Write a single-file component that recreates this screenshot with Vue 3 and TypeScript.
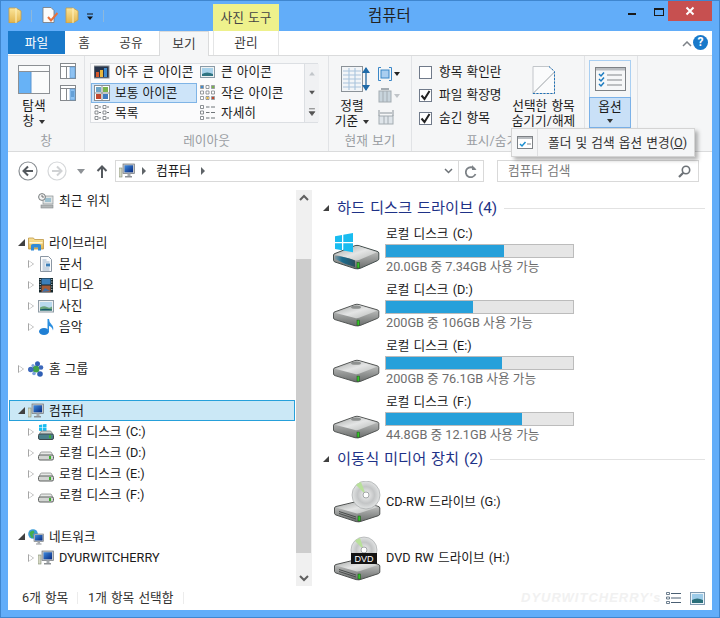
<template>
  <div class="window">
    <!-- 아이콘 심볼 -->
    <svg class="defs" width="0" height="0" aria-hidden="true">
      <defs>
        <linearGradient id="g-top" x1="0" y1="0" x2="1" y2="1"><stop offset="0" stop-color="#a5a8a6" /><stop offset=".5" stop-color="#e4e5e5" /><stop offset="1" stop-color="#b4b7b5" /></linearGradient>
        <linearGradient id="g-side" x1="0" y1="0" x2="0" y2="1"><stop offset="0" stop-color="#d6d7d6" /><stop offset="1" stop-color="#6a6d6c" /></linearGradient>
        <linearGradient id="g-teal" x1="0" y1="0" x2="1" y2="0"><stop offset="0" stop-color="#7f9aa3" /><stop offset=".35" stop-color="#1c6d90" /><stop offset="1" stop-color="#2c4f5c" /></linearGradient>
        <linearGradient id="g-screen" x1="0" y1="0" x2="1" y2="1"><stop offset="0" stop-color="#3f8be0" /><stop offset="1" stop-color="#06297f" /></linearGradient>
        <linearGradient id="g-folder" x1="0" y1="0" x2="0" y2="1"><stop offset="0" stop-color="#fbe59a" /><stop offset="1" stop-color="#e2b44c" /></linearGradient>
        <radialGradient id="g-disc"><stop offset="0" stop-color="#f4f4f4" /><stop offset=".6" stop-color="#c3c5c6" /><stop offset="1" stop-color="#e2e4e4" /></radialGradient>

        <symbol id="i-monitor" viewBox="0 0 16 16">
          <rect x="0" y="5" width="3" height="9" fill="#d5d8c4" stroke="#7f8a72" stroke-width=".6" />
          <rect x="4" y="1" width="11.5" height="9.5" fill="#c2c6ca" stroke="#6f7478" stroke-width=".7" />
          <rect x="5.5" y="2.3" width="8.5" height="7" fill="url(#g-screen)" />
          <rect x="8.5" y="10.5" width="3" height="2.5" fill="#a5a9ad" />
          <rect x="6" y="13" width="7" height="1.5" fill="#8d9195" />
        </symbol>
        <symbol id="i-recent" viewBox="0 0 16 16">
          <rect x="5" y="3" width="10" height="8" fill="#dfe3e3" stroke="#8b9192" stroke-width=".7" />
          <rect x="7" y="5" width="6" height="4" fill="#9cc0cf" />
          <circle cx="4" cy="4" r="3.4" fill="#f4f4f4" stroke="#767b7c" />
          <path d="M4 2v2h2" fill="none" stroke="#555" stroke-width=".8" />
          <rect x="3" y="12" width="12" height="3" fill="#b3b7b7" stroke="#83888a" stroke-width=".6" />
        </symbol>
        <symbol id="i-library" viewBox="0 0 16 16">
          <path d="M.5 3h5l1 1.5h9V14H.5z" fill="url(#g-folder)" stroke="#bd9442" stroke-width=".8" />
          <path d="M1.5 7h13v1.5h-13z" fill="#fff6d5" />
          <path d="M3 15.500V10.500Q3 9 5 9h6q2 0 2 1.500v5h-3v-3H6v3z" fill="#2f8ad6" />
        </symbol>
        <symbol id="i-doc" viewBox="0 0 16 16">
          <path d="M2.500.5h8l3 3v12h-11z" fill="#fbfcfd" stroke="#8a96a3" />
          <path d="M4.500 4h4M4.500 6h7M4.500 12h7M4.500 14h7" stroke="#8aa6bf" stroke-width=".9" />
          <rect x="8" y="7.500" width="4" height="3" fill="#3d7fb8" />
          <path d="M4.500 8h3M4.500 10h3" stroke="#8aa6bf" stroke-width=".9" />
        </symbol>
        <symbol id="i-video" viewBox="0 0 16 16">
          <rect x="1" y="1" width="14" height="14.500" fill="#14262b" />
          <rect x="3.500" y="1.500" width="9" height="6" fill="#3b7eb8" />
          <rect x="3.500" y="8.500" width="9" height="6.500" fill="#a35b36" />
          <path d="M4 15l3-4 5 3z" fill="#3e6fa6" />
          <path d="M1.700 2.500h1M1.700 5h1M1.700 7.500h1M1.700 10h1M1.700 12.500h1M13.300 2.500h1M13.300 5h1M13.300 7.500h1M13.300 10h1M13.300 12.500h1" stroke="#d7e3ea" stroke-width="1.200" />
        </symbol>
        <symbol id="i-photo" viewBox="0 0 16 16">
          <rect x=".5" y="2.500" width="15" height="11.500" fill="#edf0f2" stroke="#8e9ba5" />
          <rect x="2" y="4" width="12" height="8.500" fill="#b8d9ee" />
          <path d="M2 9.500q4-2 7-.5t5-.5v4H2z" fill="#6aa47c" />
          <path d="M2 11.500q5-1.500 12 0v1H2z" fill="#15576b" />
        </symbol>
        <symbol id="i-music" viewBox="0 0 16 16">
          <ellipse cx="6" cy="12.500" rx="5" ry="3.500" fill="#1f7fd4" />
          <path d="M9.500 12V0h1.500q0 3 2.500 5.500t1.500 6q-1-4-4-4.500v5z" fill="#2b8fe0" />
        </symbol>
        <symbol id="i-homegroup" viewBox="0 0 16 16">
          <circle cx="8" cy="8" r="3.500" fill="#3fa348" />
          <circle cx="9.500" cy="2.800" r="2.500" fill="#2f5fb5" />
          <circle cx="2.800" cy="8.500" r="2.800" fill="#3c68bb" />
          <circle cx="13" cy="6.500" r="2.300" fill="#3c68bb" />
          <circle cx="12" cy="13" r="2.800" fill="#2f5fb5" />
          <circle cx="6" cy="12.500" r="1.800" fill="#7aa0dc" />
          <circle cx="5" cy="4.500" r="1.600" fill="#7aa0dc" />
        </symbol>
        <symbol id="i-network" viewBox="0 0 16 16">
          <circle cx="5" cy="5" r="4.800" fill="#3b9bd8" />
          <path d="M1.500 3.500q2-2 4-2l1 2-2 2 1 3-2 .5-1.500-3z" fill="#47ad4b" />
          <rect x="6" y="5" width="9.500" height="7.500" fill="#bfc4c8" stroke="#6f7478" stroke-width=".6" />
          <rect x="7" y="6" width="7.500" height="5.500" fill="url(#g-screen)" />
          <rect x="9.500" y="12.500" width="2.500" height="2" fill="#a5a9ad" />
          <rect x="8" y="14.500" width="5.500" height="1" fill="#8d9195" />
        </symbol>
        <symbol id="i-drive" viewBox="0 0 16 16">
          <path d="M1 11l1.500-3.500Q3 7 4 7h8q1 0 1.500.5L15 11z" fill="#e6e8e6" stroke="#8a8d8b" stroke-width=".8" />
          <rect x=".5" y="10" width="15" height="5" rx="1.500" fill="#d2d4d2" stroke="#5f6261" />
          <rect x="11" y="11" width="2" height="3" fill="#3cb22f" />
        </symbol>
        <symbol id="i-drive-win" viewBox="0 0 16 16">
          <path d="M1 .9L4.200.4V3.400H1zM4.900.3L8.500 0v3.400H4.900zM1 4.100h3.200v3.100L1 6.800zM4.900 4.100h3.600V7.500l-3.600-.3z" fill="#19bcf0" />
          <path d="M1 11l1.500-3q.5-1 1.500-1h8q1 0 1.500 1L15 11z" fill="#cdd2cf" stroke="#7f8583" stroke-width=".8" />
          <rect x=".5" y="10" width="15" height="5.500" rx="1.500" fill="#4b7f8a" stroke="#3c4a4e" />
          <rect x="11" y="11.300" width="2" height="3" fill="#3cb22f" />
        </symbol>
        <symbol id="i-hdd" viewBox="0 0 48 26" preserveAspectRatio="none">
          <path d="M1.500 11Q1.500 10 3 9.500L23 1.700q2-.7 4 0l18 5.600q1.800.6 1.800 1.700v6q0 1-1.500 1.700L29 24q-3 1.400-6 .6L3 18q-1.500-.6-1.500-1.700z" fill="url(#g-side)" stroke="#4f5251" stroke-width="1" />
          <path d="M3 10.500L24 2.500q1.500-.5 3 0L45 8.300 27 16q-2 .8-4 .3z" fill="url(#g-top)" />
          <ellipse cx="24" cy="4.500" rx="5" ry="1.700" fill="#8d908f" />
          <rect x="25" y="18.500" width="2.300" height="5.500" fill="#35c22b" stroke="#17510f" stroke-width=".5" />
        </symbol>
        <symbol id="i-hdd-win" viewBox="0 0 48 37">
          <path d="M1.500 22Q1.500 21 3 20.500L23 12.700q2-.7 4 0l18 5.600q1.800.6 1.800 1.700v6q0 1-1.500 1.700L29 35q-3 1.400-6 .6L3 29q-1.500-.6-1.500-1.700z" fill="url(#g-side)" stroke="#444f4e" stroke-width="1" />
          <path d="M3 21.500L24 13.500q1.500-.5 3 0L45 19.300 27 27q-2 .8-4 .3z" fill="url(#g-top)" />
          <path d="M3 23q9 0 20 4.500v6.500Q12 31 3 26z" fill="url(#g-teal)" />
          <rect x="25" y="29.500" width="2.300" height="5.500" fill="#35c22b" stroke="#17510f" stroke-width=".5" />
          <path d="M3 3.200L10 2v7H3zM11.300 1.800L21 0v9h-9.700zM3 10.300h7v7L3 16zM11.300 10.300H21v9l-9.700-1.700z" fill="#19bcf0" />
        </symbol>
        <symbol id="i-opt" viewBox="0 0 48 22">
          <path d="M1.500 7Q1.500 6 3 5.500L23 .7q2-.4 4 0l18 4.600q1.800.5 1.800 1.700v6q0 1-1.500 1.700L29 20q-3 1.400-6 .6L3 14q-1.500-.6-1.500-1.700z" fill="url(#g-side)" stroke="#4f5251" stroke-width="1" />
          <path d="M3 6.500L24 1.500q1.500-.3 3 0L45 6 27 12q-2 .8-4 .3z" fill="url(#g-top)" />
          <path d="M6 10.500l17 5.500M6 12.500l17 5.500" stroke="#4a4d4c" stroke-width="1" />
          <rect x="25" y="15" width="2.300" height="5" fill="#35c22b" stroke="#17510f" stroke-width=".5" />
        </symbol>
      </defs>
    </svg>

    <!-- 제목 표시줄 -->
    <header class="titlebar">
      <div class="qat">
        <svg class="qa-folder" width="14" height="16" viewBox="0 0 14 16"><path d="M1 1h7l5 3v9l-5 3H1z" fill="url(#g-folder)" stroke="#c79d45" stroke-width=".8" /><path d="M8 1v15" stroke="#fff3c2" /></svg>
        <i class="qa-sep"></i>
        <svg class="qa-doc" width="16" height="16" viewBox="0 0 16 16"><path d="M1 .5h8l3 3v12H1z" fill="#fbfbfb" stroke="#777" stroke-width=".8" /><path d="M6 10l3 3.500L15.500 6" fill="none" stroke="#e8703a" stroke-width="2" /></svg>
        <svg class="qa-folder2" width="14" height="16" viewBox="0 0 14 16"><path d="M1 1h7l5 3v9l-5 3H1z" fill="url(#g-folder)" stroke="#c79d45" stroke-width=".8" /><path d="M8 1v15" stroke="#fff3c2" /></svg>
        <svg class="qa-drop" width="8" height="8" viewBox="0 0 8 8"><path d="M1 1h6" stroke="#111" stroke-width="1" /><path d="M1 3.500h6L4 7z" fill="#111" /></svg>
        <i class="qa-sep last"></i>
      </div>
      <div class="tool-tab">사진 도구</div>
      <div class="title">컴퓨터</div>
      <div class="controls">
        <i class="ctl-min"></i>
        <i class="ctl-max"></i>
        <div class="ctl-close"><svg width="10" height="10" viewBox="0 0 10 10"><path d="M1.500 1.500l7 7M8.500 1.500l-7 7" stroke="#fff" stroke-width="2" /></svg></div>
      </div>
    </header>

    <div class="client">
      <!-- 리본 탭 -->
      <nav class="tabs">
        <div class="tab file">파일</div>
        <div class="tab home">홈</div>
        <div class="tab share">공유</div>
        <div class="tab view">보기</div>
        <div class="tab manage">관리</div>
        <svg class="collapse" width="10" height="6" viewBox="0 0 10 6"><path d="M1 5l4-4 4 4" fill="none" stroke="#7d8288" stroke-width="1.500" /></svg>
        <div class="help">?</div>
      </nav>

      <!-- 리본 -->
      <section class="ribbon">
        <div class="rgroup g-pane">
          <div class="rbody">
            <div class="pane-big">
              <svg width="32" height="29" viewBox="0 0 32 29"><rect x=".5" y=".5" width="31" height="28" fill="#fbfcfc" stroke="#8c9094" /><path d="M.5 6.500h31" stroke="#8c9094" /><rect x="1" y="7" width="12" height="21" fill="#67b2f6" /><path d="M13 7v21" stroke="#5c96d0" /></svg>
              <span class="pane-label">탐색<br />창 <b class="caret"></b></span>
            </div>
            <div class="pane-small">
              <svg width="16" height="16" viewBox="0 0 16 16"><rect x=".5" y=".5" width="15" height="15" fill="#fff" stroke="#85898d" /><path d="M.5 3.500h15M6.500 3.500v12" stroke="#85898d" /><rect x="10" y="4" width="5" height="11" fill="#8ec2f2" stroke="#5c96d0" stroke-width=".6" /></svg>
              <svg width="16" height="16" viewBox="0 0 16 16"><rect x=".5" y=".5" width="15" height="15" fill="#fff" stroke="#85898d" /><path d="M.5 3.500h15M6.500 3.500v12" stroke="#85898d" /><rect x="10" y="4" width="5" height="11" fill="#8ec2f2" stroke="#5c96d0" stroke-width=".6" /><path d="M11 7h3M11 9h3M11 11h3" stroke="#2a6fb0" stroke-width=".8" /></svg>
            </div>
          </div>
          <div class="rlabel">창</div>
        </div>

        <div class="rgroup g-layout">
          <div class="rbody">
            <div class="gallery">
              <div class="gal-grid">
                <div v-for="g in layouts" :key="g.label" class="gal-item" :class="{ on: g.on }">
                  <svg width="16" height="16" viewBox="0 0 16 16" class="gal-ico" v-html="g.icon"></svg>
                  <span>{{ g.label }}</span>
                </div>
              </div>
              <div class="gal-scroll">
                <svg width="14" height="20" viewBox="0 0 14 20"><path d="M4 12l3-4 3 4z" fill="#c2c6ca" /></svg>
                <svg width="14" height="20" viewBox="0 0 14 20"><path d="M4 8l3 4 3-4z" fill="#555" /></svg>
                <svg width="14" height="20" viewBox="0 0 14 20"><path d="M4 6h6M4 9l3 4 3-4z" fill="#555" stroke="#555" stroke-width=".8" /></svg>
              </div>
            </div>
          </div>
          <div class="rlabel">레이아웃</div>
        </div>

        <div class="rgroup g-current">
          <div class="rbody">
            <div class="sort-btn">
              <svg width="22" height="26" viewBox="0 0 22 26"><rect x=".5" y=".5" width="21" height="25" fill="#f2f5f8" stroke="#8b9298" /><path d="M2 5h18M2 9h18M2 13h18M2 17h18M2 21h18M8 2v22M14 2v22" stroke="#a9c4dc" stroke-width="1.100" /></svg>
              <span class="sort-label">정렬<br />기준 <b class="caret"></b></span>
            </div>
            <div class="cur-col">
              <svg width="10" height="26" viewBox="0 0 10 26"><path d="M5 2v22" stroke="#3a78ad" stroke-width="1.500" /><path d="M1 7l4-6 4 6zM1 19l4 6 4-6z" fill="#1f6aa8" /></svg>
              <div class="cur-side">
                <div class="cur-i">
                  <svg width="14" height="14" viewBox="0 0 14 14"><path d="M3 .5H.5v13H3M11 .5h2.500v13H11" fill="none" stroke="#3a87c8" /><rect x="3" y="3" width="8" height="8" fill="#a9cef0" stroke="#3a87c8" /></svg>
                  <b class="mini-caret"></b>
                </div>
                <div class="cur-i">
                  <svg width="14" height="15" viewBox="0 0 14 15"><rect x="1" y="3" width="12" height="11" fill="#c8d4dc" stroke="#a4acb2" /><path d="M5 3v11M9 3v11" stroke="#a4acb2" /><path d="M3 1h8" stroke="#a4acb2" stroke-width="2" /></svg>
                  <b class="mini-caret light"></b>
                </div>
                <div class="cur-i">
                  <svg width="16" height="15" viewBox="0 0 16 15"><rect x="1" y="6" width="14" height="8" fill="#dfe5ea" stroke="#a4acb2" /><path d="M6 6v8M10 6v8" stroke="#a4acb2" /><path d="M2 3h12M1 0v6M15 0v6" stroke="#8b949b" /></svg>
                </div>
              </div>
            </div>
          </div>
          <div class="rlabel">현재 보기</div>
        </div>

        <div class="rgroup g-show">
          <div class="rbody">
            <div class="checks">
              <label v-for="c in checks" :key="c.label" class="check">
                <span class="box"><svg v-if="c.on" width="11" height="11" viewBox="0 0 11 11"><path d="M1.500 5.500l3 3.500 5-8" fill="none" stroke="#222" stroke-width="2" /></svg></span>
                {{ c.label }}
              </label>
            </div>
            <div class="hide-btn">
              <svg width="23" height="28" viewBox="0 0 23 28"><path d="M1 .5h16l5.500 5V27.500H1z" fill="#fafbfc" stroke="#c2c6ca" /><path d="M1 27.500L22.500 6" stroke="#9aa0a5" /><path d="M17 .5l5.500 5v22H1" fill="none" stroke="#1c70b8" stroke-dasharray="2 1.500" /></svg>
              <span>선택한 항목<br />숨기기/해제</span>
            </div>
          </div>
          <div class="rlabel">표시/숨기기</div>
        </div>

        <div class="rgroup g-options">
          <div class="opt-btn">
            <div class="opt-top">
              <svg width="31" height="24" viewBox="0 0 31 24"><rect x=".5" y=".5" width="30" height="23" fill="#f6f7f8" stroke="#7d8185" /><rect x="1" y="1" width="29" height="2.500" fill="#b9bdc1" /><path d="M4 7l2 2 3-3.500M4 12l2 2 3-3.500M4 17l2 2 3-3.500" fill="none" stroke="#1d7cc0" stroke-width="1.500" /><path d="M12 8h15M12 13h15M12 18h15" stroke="#83878b" /></svg>
            </div>
            <div class="opt-bottom">옵션<b class="caret block"></b></div>
          </div>
        </div>
      </section>

      <!-- 주소 표시줄 -->
      <div class="addrbar">
        <svg class="nav-back" width="20" height="20" viewBox="0 0 20 20"><circle cx="10" cy="10" r="9" fill="#fff" stroke="#8a8f94" stroke-width="1.200" /><path d="M15 10H6M10 5.500L5.500 10l4.500 4.500" fill="none" stroke="#54595e" stroke-width="2" /></svg>
        <svg class="nav-fwd" width="20" height="20" viewBox="0 0 20 20"><circle cx="10" cy="10" r="9" fill="#fff" stroke="#d5d7d9" stroke-width="1.200" /><path d="M5 10h9M10 5.500l4.500 4.500-4.500 4.500" fill="none" stroke="#d0d2d4" stroke-width="2" /></svg>
        <svg class="nav-drop" width="8" height="5" viewBox="0 0 8 5"><path d="M0 0h8L4 5z" fill="#8e9296" /></svg>
        <svg class="nav-up" width="12" height="13" viewBox="0 0 12 13"><path d="M6 13V2M1.500 6L6 1.500 10.500 6" fill="none" stroke="#54595e" stroke-width="2" /></svg>
        <div class="address">
          <svg class="addr-ico" width="16" height="16"><use href="#i-monitor" /></svg>
          <b class="crumb"></b>
          <span class="addr-text">컴퓨터</span>
          <b class="crumb"></b>
          <svg class="addr-chev" width="9" height="6" viewBox="0 0 9 6"><path d="M1 1l3.500 3.500L8 1" fill="none" stroke="#6d7277" stroke-width="1.500" /></svg>
          <div class="addr-refresh">
            <svg width="12" height="13" viewBox="0 0 12 13"><path d="M10 4.500A5 5 0 1 0 10.500 9" fill="none" stroke="#7d8287" stroke-width="1.800" /><path d="M7 0v5h4.500z" fill="#7d8287" /></svg>
          </div>
        </div>
        <div class="search">
          <span>컴퓨터 검색</span>
          <svg width="13" height="13" viewBox="0 0 13 13"><circle cx="8" cy="5" r="3.700" fill="none" stroke="#6d7277" stroke-width="1.600" /><path d="M5.300 7.700L1 12" stroke="#6d7277" stroke-width="2.200" /></svg>
        </div>
      </div>

      <!-- 본문 -->
      <main class="main">
        <aside class="tree">
          <template v-for="(r, i) in tree" :key="i">
            <div v-if="r.blank" class="trow"></div>
            <div v-else class="trow" :class="[`lv${r.level}`, { sel: r.sel }]">
              <b class="twist" :class="r.arrow"></b>
              <svg class="tico" width="16" height="16"><use :href="`#${r.icon}`" /></svg>
              <span>{{ r.label }}</span>
            </div>
          </template>
        </aside>

        <div class="vscroll">
          <svg class="vs-arrow" width="16" height="17" viewBox="0 0 16 17"><path d="M4 10l4-4 4 4" fill="none" stroke="#606060" stroke-width="2" /></svg>
          <div class="vs-upper"></div>
          <div class="vs-thumb"></div>
          <div class="vs-lower"></div>
          <svg class="vs-arrow" width="16" height="17" viewBox="0 0 16 17"><path d="M4 7l4 4 4-4" fill="none" stroke="#606060" stroke-width="2" /></svg>
        </div>

        <div class="files">
          <div class="ghead">
            <b class="gtri"></b>
            <span class="gtitle">하드 디스크 드라이브 (4)</span>
            <i class="gline"></i>
          </div>
          <div class="drives">
            <div v-for="d in disks" :key="d.name" class="drive">
              <div class="dicon" :class="{ win: d.win }">
                <svg v-if="d.win" width="48" height="37"><use href="#i-hdd-win" /></svg>
                <svg v-else width="48" height="24"><use href="#i-hdd" /></svg>
              </div>
              <div class="dinfo">
                <div class="dname">{{ d.name }}</div>
                <div class="dbar"><div class="dfill" :style="{ width: d.used + 'px' }"></div></div>
                <div class="dsub">{{ d.sub }}</div>
              </div>
            </div>
          </div>
          <div class="ghead second">
            <b class="gtri"></b>
            <span class="gtitle">이동식 미디어 장치 (2)</span>
            <i class="gline"></i>
          </div>
          <div class="optical">
            <svg width="50" height="42" viewBox="0 0 50 42">
              <use href="#i-opt" x="1" y="20" width="48" height="22" />
              <circle cx="34" cy="14" r="14" fill="url(#g-disc)" stroke="#9a9d9f" stroke-width=".6" />
              <path d="M34 14L24 4a14 14 0 0 1 5-3z" fill="#b8e09a" />
              <circle cx="34" cy="14" r="3" fill="#fff" stroke="#a4a7a9" />
            </svg>
            <span>CD-RW 드라이브 (G:)</span>
          </div>
          <div class="optical">
            <svg width="50" height="46" viewBox="0 0 50 46">
              <use href="#i-opt" x="1" y="24" width="48" height="22" />
              <circle cx="32" cy="15" r="13" fill="url(#g-disc)" stroke="#9a9d9f" stroke-width=".6" />
              <path d="M32 15L23 6a13 13 0 0 1 5-3z" fill="#b8e09a" />
              <circle cx="32" cy="15" r="3" fill="#fff" stroke="#a4a7a9" />
              <rect x="19" y="18" width="26" height="11" fill="#141414" />
              <text x="32" y="27" text-anchor="middle" class="dvd">DVD</text>
            </svg>
            <span>DVD RW 드라이브 (H:)</span>
          </div>
        </div>
      </main>

      <!-- 상태 표시줄 -->
      <footer class="status">
        <span class="st-count">6개 항목</span>
        <i class="st-sep"></i>
        <span class="st-sel">1개 항목 선택함</span>
        <i class="st-sep"></i>
        <div class="st-views">
          <svg width="15" height="12" viewBox="0 0 15 12"><path d="M5 1.500h10M5 6h10M5 10.500h10" stroke="#4a5f73" /><path d="M.5.500h3v2h-3zM.5 5h3v2h-3zM.5 9.500h3v2h-3z" fill="#fff" stroke="#4a5f73" stroke-width=".8" /></svg>
          <svg width="15" height="13" viewBox="0 0 15 13"><rect x=".5" y=".5" width="14" height="12" fill="#e9f2f8" stroke="#7f9ab0" /><rect x="2" y="2" width="11" height="9" fill="#9ccbe8" /><path d="M2 8q5-3 11 0v3H2z" fill="#2a6f7a" /></svg>
        </div>
      </footer>

      <!-- 옵션 드롭다운 -->
      <div class="popup">
        <div class="pop-ico">
          <svg width="16" height="13" viewBox="0 0 16 13"><rect x=".5" y=".5" width="15" height="12" fill="#fff" stroke="#7d8185" /><rect x="1" y="1" width="14" height="2" fill="#b9bdc1" /><path d="M3 8l2 2 3.500-4" fill="none" stroke="#1d8fd0" stroke-width="1.500" /><path d="M10 8h4" stroke="#83878b" /></svg>
        </div>
        <div class="pop-text">폴더 및 검색 옵션 변경(<u>O</u>)</div>
      </div>

      <div class="watermark">DYURWITCHERRY's</div>
    </div>
  </div>
</template>

<script setup lang="ts">
interface TreeRow {
  blank?: boolean
  label?: string
  icon?: string
  level?: number
  arrow?: 'open' | 'closed' | 'none'
  sel?: boolean
}

interface Disk {
  name: string
  sub: string
  used: number
  win?: boolean
}

// 픽셀 아이콘 조각
const grid4 = '<rect x=".5" y=".5" width="15" height="15" fill="#fff" stroke="#8a8f94"/>'
const layouts = [
  { label: '아주 큰 아이콘', icon: '<rect x="0" y="2" width="15" height="12" fill="#27344a" stroke="#8a8f94"/><rect x="2" y="8" width="3" height="5" fill="#d8572a"/><rect x="6" y="6" width="3" height="7" fill="#e8b63c"/><rect x="10" y="4" width="3" height="9" fill="#3f8bd0"/>' },
  { label: '큰 아이콘', icon: '<rect x=".5" y="2.500" width="14" height="11" fill="#eef2f4" stroke="#8a9aa6"/><rect x="2" y="4" width="11" height="8" fill="#a9d2ea"/><path d="M2 10q5-3 11 0v2H2z" fill="#2f7482"/>' },
  { label: '보통 아이콘', on: true, icon: grid4 + '<rect x="2" y="2" width="5" height="5" fill="#6ea5c6"/><rect x="9" y="2" width="5" height="5" fill="#7ab34d"/><rect x="2" y="9" width="5" height="5" fill="#c2482e"/><rect x="9" y="9" width="5" height="5" fill="#3f7cc0"/><path d="M0 8h16M8 0v16" stroke="#8a8f94"/>' },
  { label: '작은 아이콘', icon: '<g fill="#fff" stroke="#6f7478" stroke-width=".7"><path d="M.5.500h3v3h-3zM6 .5h3v3H6zM11.500.5h3v3h-3zM.5 6h3v3h-3zM6 6h3v3H6zM11.500 6h3v3h-3zM.5 11.500h3v3h-3zM6 11.500h3v3H6zM11.500 11.500h3v3h-3z"/></g><rect x="1" y="1" width="2" height="2" fill="#3f8bd0"/><rect x="12" y="12" width="2" height="2" fill="#c2482e"/><rect x="12" y="1" width="2" height="2" fill="#7ab34d"/><rect x="6.500" y="12" width="2" height="2" fill="#e8b63c"/>' },
  { label: '목록', icon: '<g fill="#fff" stroke="#6f7478" stroke-width=".8"><path d="M1 .5h3v3H1zM1 6h3v3H1zM1 11.500h3v3H1zM9 .5h3v3H9zM9 6h3v3H9zM9 11.500h3v3H9z"/></g><path d="M5 2h2M5 7.500h2M5 13h2M13 2h2M13 7.500h2M13 13h2" stroke="#6f7478"/>' },
  { label: '자세히', icon: '<g fill="#fff" stroke="#6f7478" stroke-width=".8"><path d="M.5.500h3v3h-3zM.5 6h3v3h-3zM.5 11.500h3v3h-3z"/></g><path d="M6 2h3.500M11 2h4M6 7.500h3.500M11 7.500h4M6 13h3.500M11 13h4" stroke="#6f7478"/>' }
]

const checks = [
  { label: '항목 확인란', on: false },
  { label: '파일 확장명', on: true },
  { label: '숨긴 항목', on: true }
]

const tree: TreeRow[] = [
  { label: '최근 위치', icon: 'i-recent', level: 1, arrow: 'none' },
  { blank: true },
  { label: '라이브러리', icon: 'i-library', level: 0, arrow: 'open' },
  { label: '문서', icon: 'i-doc', level: 1, arrow: 'closed' },
  { label: '비디오', icon: 'i-video', level: 1, arrow: 'closed' },
  { label: '사진', icon: 'i-photo', level: 1, arrow: 'closed' },
  { label: '음악', icon: 'i-music', level: 1, arrow: 'closed' },
  { blank: true },
  { label: '홈 그룹', icon: 'i-homegroup', level: 0, arrow: 'closed' },
  { blank: true },
  { label: '컴퓨터', icon: 'i-monitor', level: 0, arrow: 'open', sel: true },
  { label: '로컬 디스크 (C:)', icon: 'i-drive-win', level: 1, arrow: 'closed' },
  { label: '로컬 디스크 (D:)', icon: 'i-drive', level: 1, arrow: 'closed' },
  { label: '로컬 디스크 (E:)', icon: 'i-drive', level: 1, arrow: 'closed' },
  { label: '로컬 디스크 (F:)', icon: 'i-drive', level: 1, arrow: 'closed' },
  { blank: true },
  { label: '네트워크', icon: 'i-network', level: 0, arrow: 'open' },
  { label: 'DYURWITCHERRY', icon: 'i-monitor', level: 1, arrow: 'closed' }
]

const disks: Disk[] = [
  { name: '로컬 디스크 (C:)', sub: '20.0GB 중 7.34GB 사용 가능', used: 118, win: true },
  { name: '로컬 디스크 (D:)', sub: '200GB 중 106GB 사용 가능', used: 87 },
  { name: '로컬 디스크 (E:)', sub: '200GB 중 76.1GB 사용 가능', used: 116 },
  { name: '로컬 디스크 (F:)', sub: '44.8GB 중 12.1GB 사용 가능', used: 136 }
]
</script>

<style>
html, body { margin: 0; padding: 0; background: #62adf9; }
</style>

<style scoped>
.window {
  position: relative;
  width: 720px;
  height: 618px;
  box-sizing: border-box;
  border: 1px solid #3f86cf;
  background: #62adf9;
  padding: 0 7px 7px 7px;
  font-family: Roboto, "Noto Sans CJK KR", sans-serif;
  font-size: 12.7px;
  word-spacing: 1px;
  line-height: 20px;
  color: #1a1a1a;
  overflow: hidden;
  display: flex;
  flex-direction: column;
}
.defs { position: absolute; }

/* 제목 표시줄 */
.titlebar {
  height: 30px;
  display: flex;
  flex: none;
  align-items: stretch;
  margin-right: -7px;
}
.qat { display: flex; align-items: flex-start; width: 205px; flex: none; padding-top: 6px; }
.qat svg, .qat i { display: block; flex: none; }
.qa-sep { width: 1px; height: 12px; background: #8cb8dc; margin: 3px 0 0 9px; }
.qa-sep.last { margin-left: 9px; }
.qa-doc { margin-left: 10px; }
.qa-folder2 { margin-left: 7px; }
.qa-drop { margin: 6px 0 0 7px; }
.tool-tab {
  flex: none;
  width: 66px;
  margin-top: 3px;
  background: #eef18c;
  text-align: center;
  line-height: 27px;
  color: #444;
}
.title {
  margin-left: 89px;
  font-size: 15.5px;
  line-height: 30px;
  color: #222;
  width: 44px;
  white-space: nowrap;
  flex: none;
}
.controls { margin-left: auto; display: flex; width: 98px; position: relative; }
.ctl-min { display: block; width: 8px; height: 2px; background: #1a1a1a; margin: 12px 0 0 7px; }
.ctl-max { display: block; box-sizing: border-box; width: 10px; height: 8px; border: 1px solid #1a1a1a; border-top-width: 2px; margin: 7px 0 0 18px; }
.ctl-close {
  margin-left: auto;
  margin-right: 7px;
  width: 44px;
  height: 20px;
  background: #c75050;
  display: flex;
  align-items: center;
  justify-content: center;
}

/* 클라이언트 */
.client { position: relative; flex: 1; background: #fff; display: flex; flex-direction: column; min-height: 0; }

.tabs { height: 24px; display: flex; flex: none; position: relative; align-items: stretch; }
.tab { text-align: center; line-height: 23px; color: #3b3b3b; }
.tab.file { width: 57px; height: 23px; background: #1979ca; color: #fff; }
.tab.home { width: 38px; }
.tab.share { width: 56px; }
.tab.view {
  width: 50px;
  height: 25px;
  box-sizing: border-box;
  background: #f5f6f7;
  border: 1px solid #dadbdc;
  border-bottom: none;
  position: relative;
  z-index: 2;
}
.tab.manage { width: 66px; margin-left: 4px; border-left: 1px solid #e4e5e6; border-right: 1px solid #e4e5e6; box-sizing: border-box; }
.collapse { position: absolute; left: 674px; top: 10px; }
.help {
  position: absolute;
  left: 685px;
  top: 4px;
  width: 15px;
  height: 15px;
  border-radius: 50%;
  background: #1979ca;
  color: #fff;
  font-weight: 700;
  font-size: 12px;
  line-height: 15px;
  text-align: center;
}

/* 리본 */
.ribbon {
  height: 97px;
  flex: none;
  display: flex;
  background: #f5f6f7;
  border-top: 1px solid #dadbdc;
  border-bottom: 1px solid #dadbdc;
  box-sizing: border-box;
}
.rgroup { display: flex; flex-direction: column; flex: none; border-right: 1px solid #e1e3e6; box-sizing: border-box; }
.rbody { flex: 1; display: flex; min-height: 0; }
.rlabel { height: 20px; text-align: center; color: #9a9ea3; line-height: 20px; }
.g-pane { width: 77px; }
.g-layout { width: 244px; }
.g-current { width: 83px; }
.g-show { width: 173px; }
.g-options { width: 53px; padding: 4px 5px 0 4px; }

.caret { display: inline-block; width: 0; height: 0; border: 3px solid transparent; border-top: 4px solid #333; border-bottom: 0; vertical-align: middle; margin-left: 1px; }
.caret.block { display: block; margin: 5px auto 0; }
.mini-caret { display: block; width: 0; height: 0; border: 3px solid transparent; border-top: 4px solid #222; border-bottom: 0; }
.mini-caret.light { border-top-color: #c0c4c8; }

.pane-big { width: 52px; padding: 9px 0 0 0; display: flex; flex-direction: column; align-items: center; box-sizing: border-box; flex: none; }
.pane-big svg { display: block; flex: none; }
.pane-label, .sort-label { display: block; text-align: center; line-height: 15px; margin-top: 4px; }
.pane-small { display: flex; flex-direction: column; gap: 6px; padding: 7px 0 0 0; }
.pane-small svg { display: block; flex: none; }

.gallery { display: flex; margin: 7px 0 0 5px; width: 228px; height: 60px; box-sizing: border-box; border: 1px solid #dcdfe3; background: #fbfbfc; }
.gal-grid { width: 213px; display: grid; grid-template-columns: 106px 107px; grid-template-rows: 19px 20px 19px; }
.gal-item { display: flex; align-items: center; gap: 5px; padding-left: 3px; white-space: nowrap; box-sizing: border-box; }
.gal-item:nth-child(-n+2) { padding-bottom: 3px; }
.gal-item.on { background: #cde4f9; outline: 1px solid #7fb4e6; outline-offset: -1px; }
.gal-ico { flex: none; display: block; }
.gal-scroll { flex: 1; background: #f0f1f3; border-left: 1px solid #dcdfe3; }
.gal-scroll svg { display: block; height: 19.300px; }

.sort-btn { width: 46px; padding: 10px 0 0 0; display: flex; flex-direction: column; align-items: center; box-sizing: border-box; flex: none; }
.sort-btn svg { display: block; flex: none; }
.sort-label { margin-top: 6px; }
.cur-col { display: flex; gap: 7px; margin-left: -14px; padding-top: 10px; }
.cur-col > svg { display: block; flex: none; }
.cur-side { display: flex; flex-direction: column; gap: 7px; }
.cur-i { display: flex; align-items: center; height: 15px; gap: 2px; }
.cur-i svg { display: block; flex: none; }

.checks { display: flex; flex-direction: column; gap: 3px; padding: 6px 0 0 7px; flex: none; width: 92px; box-sizing: border-box; }
.check { display: flex; align-items: center; gap: 7px; white-space: nowrap; height: 20px; }
.box {
  width: 13px;
  height: 13px;
  box-sizing: border-box;
  border: 1px solid #707a8a;
  background: #fff;
  display: flex;
  align-items: center;
  justify-content: center;
  flex: none;
}
.box svg { display: block; }
.hide-btn { display: flex; flex-direction: column; align-items: center; padding-top: 10px; width: 79px; box-sizing: border-box; flex: none; }
.hide-btn svg { display: block; flex: none; }
.hide-btn span { display: block; text-align: center; line-height: 15px; margin-top: 4px; white-space: nowrap; }

.opt-btn { width: 42px; height: 68px; display: flex; flex-direction: column; box-sizing: border-box; flex: none; }
.opt-top { height: 37px; border: 1px solid #a9cff2; border-bottom: none; display: flex; align-items: flex-start; justify-content: center; padding-top: 6px; box-sizing: border-box; flex: none; }
.opt-top svg { display: block; flex: none; }
.opt-bottom { flex: 1; background: #c9e0f7; border: 1px solid #7ab1e8; text-align: center; line-height: 15px; padding-top: 1px; }

/* 주소 표시줄 */
.addrbar { height: 33px; display: flex; align-items: center; flex: none; padding: 5px 0 0 10px; box-sizing: border-box; background: #fff; }
.addrbar > svg { display: block; flex: none; }
.nav-fwd { margin-left: 9px; }
.nav-drop { margin-left: 10px; }
.nav-up { margin-left: 11px; }
.address {
  margin-left: 7px;
  width: 369px;
  height: 22px;
  box-sizing: border-box;
  border: 1px solid #d9d9d9;
  display: flex;
  align-items: center;
  flex: none;
  position: relative;
}
.addr-ico { margin-left: 3px; }
.crumb { width: 0; height: 0; border: 4px solid transparent; border-left: 4px solid #5f6468; border-right: 0; margin-left: 7px; display: block; }
.addr-text { margin-left: 10px; color: #1a1a1a; }
.addr-text + .crumb { margin-left: 10px; }
.addr-chev { margin-left: auto; margin-right: 5px; display: block; }
.addr-refresh { width: 24px; height: 100%; border-left: 1px solid #d9d9d9; display: flex; align-items: center; justify-content: center; flex: none; }
.addr-refresh svg { display: block; }
.search {
  margin-left: 13px;
  width: 202px;
  height: 22px;
  box-sizing: border-box;
  border: 1px solid #d9d9d9;
  display: flex;
  align-items: center;
  justify-content: space-between;
  padding: 0 7px 0 10px;
  color: #7a7a7a;
  flex: none;
}
.search svg { display: block; }

/* 본문 */
.main { flex: 1; display: flex; min-height: 0; padding-top: 5px; }
.tree { width: 288px; flex: none; }
.trow { height: 21px; display: flex; align-items: center; white-space: nowrap; box-sizing: border-box; }
.trow.lv0 { padding-left: 10px; }
.trow.lv1 { padding-left: 20px; }
.trow.sel { background: #cbe8f6; border: 1px solid #26a0da; margin: 0 1px; padding-left: 8px; }
.twist { width: 7px; height: 9px; flex: none; position: relative; display: block; margin-right: 3px; box-sizing: border-box; }
.twist.closed { border-left: 6px solid #a6a6a6; border-top: 4.500px solid transparent; border-bottom: 4.500px solid transparent; width: 0; height: 0; margin-right: 4px; }
.twist.closed::after { content: ""; position: absolute; left: -5px; top: -3px; border-left: 4px solid #fff; border-top: 3px solid transparent; border-bottom: 3px solid transparent; }
.twist.open { width: 0; height: 0; border-bottom: 7px solid #404040; border-left: 7px solid transparent; margin-right: 3px; }
.tico { display: block; flex: none; margin-right: 5px; }
.vscroll { width: 16px; flex: none; display: flex; flex-direction: column; background: #f0f0f0; }
.vs-arrow { display: block; flex: none; }
.vs-upper { height: 52px; flex: none; }
.vs-thumb { height: 294px; background: #cdcdcd; margin-right: 1px; flex: none; }
.vs-lower { flex: 1; }

.files { flex: 1; min-width: 0; padding-top: 6px; }
.ghead { height: 20px; display: flex; align-items: center; padding-left: 11px; margin-top: 2px; margin-bottom: 6px; }
.ghead.second { margin-top: 1px; margin-bottom: 5px; }
.gtri { width: 0; height: 0; border-bottom: 6px solid #404040; border-left: 6px solid transparent; margin-right: 8px; flex: none; }
.gtitle { font-size: 15.3px; color: #1e3287; white-space: nowrap; flex: none; }
.gline { display: block; flex: 1; height: 1px; background: #e2e2e2; margin: 1px 7px 0 7px; }
.drive { height: 56px; display: flex; padding-left: 20px; box-sizing: border-box; }
.dicon { width: 53px; flex: none; padding-top: 23px; box-sizing: border-box; }
.dicon.win { padding-top: 9px; }
.dicon svg { display: block; }
.dinfo { width: 189px; flex: none; }
.dname { height: 20px; line-height: 20px; padding-left: 1px; white-space: nowrap; }
.dbar { height: 14px; box-sizing: border-box; background: #e6e6e6; border: 1px solid #bcbcbc; }
.dfill { height: 100%; background: #26a0da; }
.dsub { line-height: 16px; padding-left: 1px; margin-top: 1px; color: #6d6d6d; white-space: nowrap; word-spacing: 0; }
.optical { height: 56px; display: flex; align-items: center; padding-left: 20px; box-sizing: border-box; gap: 4px; }
.optical svg { display: block; flex: none; }
.dvd { font-family: "Liberation Sans", sans-serif; font-size: 9px; fill: #fff; }

/* 상태 표시줄 */
.status { height: 24px; flex: none; display: flex; align-items: center; padding-left: 14px; color: #333; position: relative; }
.st-sep { display: block; width: 1px; height: 12px; background: #ececec; margin: 0 10px; }
.st-count { width: 45px; white-space: nowrap; }
.st-sel { width: 85px; white-space: nowrap; }
.st-views { margin-left: auto; margin-right: 7px; display: flex; gap: 9px; align-items: center; }
.st-views svg { display: block; }

/* 옵션 드롭다운 */
.popup {
  position: absolute;
  left: 503px;
  top: 97px;
  width: 184px;
  height: 29px;
  box-sizing: border-box;
  display: flex;
  background: #f5f6f7;
  border: 1px solid #d4d4d4;
  box-shadow: 3px 3px 4px rgba(0, 0, 0, 0.3);
  z-index: 5;
}
.pop-ico { width: 25px; border-right: 1px solid #dfe0e2; display: flex; align-items: center; justify-content: center; flex: none; }
.pop-ico svg { display: block; }
.pop-text { padding-left: 10px; line-height: 27px; white-space: nowrap; color: #333; }
.watermark {
  position: absolute;
  left: 513px;
  top: 557px;
  font-family: "Liberation Sans", sans-serif;
  font-style: italic;
  font-weight: 700;
  font-size: 13px;
  letter-spacing: 1px;
  color: #f1f1f1;
}
</style>
